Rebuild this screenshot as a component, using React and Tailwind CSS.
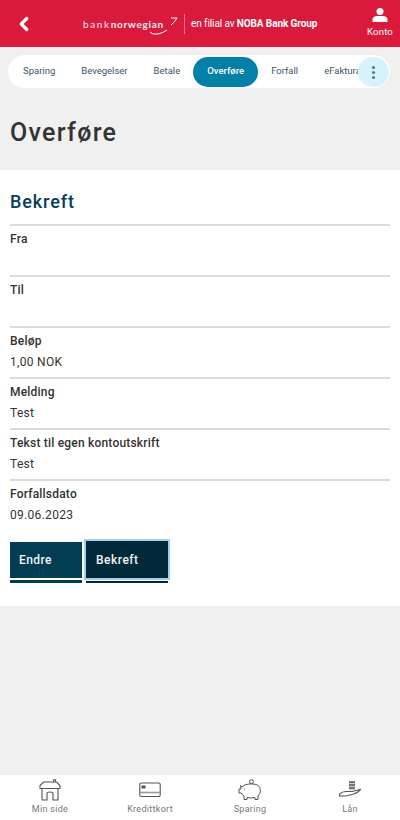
import { ChevronLeft } from 'lucide-react';

const tabs = ['Sparing', 'Bevegelser', 'Betale', 'Overføre', 'Forfall', 'eFaktura'];

const rows = [
    { label: 'Fra', value: '' },
    { label: 'Til', value: '' },
    { label: 'Beløp', value: '1,00 NOK' },
    { label: 'Melding', value: 'Test' },
    { label: 'Tekst til egen kontoutskrift', value: 'Test' },
    { label: 'Forfallsdato', value: '09.06.2023' },
];

const HomeIcon = () => (
    <svg width="22" height="22" viewBox="0 0 22 22" fill="none" stroke="#555" strokeWidth="1.1">
        <path d="M1 9.5 V6.5 L4.5 3 H17.5 L21 6.5 V9.5 Z" />
        <path d="M3 9.5 V21 H8 V14.5 Q8 13 11 13 Q14 13 14 14.5 V21 H19 V9.5" />
        <path d="M14.5 3 V0.8 H16.5 V3" />
    </svg>
);

const CardIcon = () => (
    <svg width="22" height="22" viewBox="0 0 22 22" fill="none" stroke="#555" strokeWidth="1.1">
        <rect x="0.8" y="4" width="20.4" height="13.5" rx="1.5" />
        <rect x="2.5" y="6.5" width="4" height="3" fill="#555" stroke="none" />
        <path d="M0.8 13.5 H21.2" stroke="#999" strokeWidth="1.6" />
    </svg>
);

const PiggyIcon = () => (
    <svg width="24" height="22" viewBox="0 0 24 22" fill="none" stroke="#555" strokeWidth="1">
        <path d="M4 8 Q7 5 11 5 H15 Q22 5 22.5 11.5 Q22.5 15 20 17 V20.5 H17 V18.5 Q13 19.5 9 18.5 V20.5 H6 V17 Q4 16 3.5 14 H1 V10 H3 L2.5 6.5 Z" />
        <circle cx="13.5" cy="2.6" r="2" />
        <circle cx="6.5" cy="10" r="0.7" fill="#4a90b8" stroke="none" />
    </svg>
);

const LoanIcon = () => (
    <svg width="22" height="22" viewBox="0 0 22 22" fill="none" stroke="#555" strokeWidth="1.1">
        <path d="M0.5 17 V15 Q4 12 8 12.5 H13 L21.5 10.5 Q20 13 15 15 L7 17 Z" />
        <rect x="10" y="2" width="6" height="2.4" fill="#777" stroke="none" />
        <rect x="10" y="5" width="6" height="2.4" fill="#777" stroke="none" />
        <rect x="10" y="8" width="6" height="2.4" fill="#777" stroke="none" />
    </svg>
);

const navItems = [
    { label: 'Min side', Icon: HomeIcon },
    { label: 'Kredittkort', Icon: CardIcon },
    { label: 'Sparing', Icon: PiggyIcon },
    { label: 'Lån', Icon: LoanIcon },
];

const App = () => {
    return (
        <div className="w-[400px] h-[820px] flex flex-col bg-[#f0f0f0] text-[#333] font-['Roboto',sans-serif]">
            <header className="h-[47px] shrink-0 bg-[#d91a3c] text-white flex items-center">
                <div className="w-[48px] flex justify-center">
                    <ChevronLeft size={22} strokeWidth={3.5} />
                </div>
                <div className="flex-1 flex items-center pl-[35px]">
                    <div className="relative w-[95px] h-[24px] flex items-center">
                        <span className="text-[10px] tracking-[1.6px] leading-none text-white/90 font-['Lato',sans-serif] whitespace-nowrap">
                            bank<b className="font-bold tracking-[0.7px]">norwegian</b>
                        </span>
                        <svg className="absolute right-[0px] top-[4px]" width="9" height="12" viewBox="0 0 9 12" fill="none" stroke="white" strokeWidth="1">
                            <path d="M2 2 H8 Q6 6 2 9" />
                        </svg>
                        <svg className="absolute left-[66px] top-[17px]" width="20" height="7" viewBox="0 0 20 7" fill="none" stroke="white" strokeWidth="1">
                            <path d="M1 3 Q3 6 9 5 Q14 4 18 1" />
                        </svg>
                    </div>
                    <div className="w-px h-[20px] bg-white/40 ml-[6px] mr-[6px]" />
                    <span className="text-[10px] whitespace-nowrap tracking-[-0.1px]">
                        en filial av <b className="font-bold">NOBA Bank Group</b>
                    </span>
                </div>
                <div className="w-[42px] flex flex-col items-center pb-[1px] pl-[2px]">
                    <svg width="16" height="14" viewBox="0 0 16 14" fill="white">
                        <circle cx="8" cy="3.6" r="3.5" />
                        <path d="M0.5 14 V11.5 Q0.5 8.5 4.5 8 H11.5 Q15.5 8.5 15.5 11.5 V14 Z" />
                    </svg>
                    <span className="text-[9.5px] leading-[12px] mt-[4px] tracking-[0.2px]">Konto</span>
                </div>
            </header>

            <div className="relative ml-[8px] mt-[8px] h-[33px] w-[382px] bg-white rounded-full flex items-center pl-[15px] overflow-hidden">
                {tabs.map((tab) => (
                    <span
                        key={tab}
                        className={
                            tab === 'Overføre'
                                ? 'h-[30px] w-[65px] -ml-[13px] mr-[13px] flex items-center justify-center rounded-full bg-[#0280a8] text-white text-[9.5px] font-medium'
                                : 'mr-[26px] text-[9.5px] text-[#3d5666] whitespace-nowrap'
                        }
                    >
                        {tab}
                    </span>
                ))}
                <div className="absolute right-[1px] top-[2px] w-[31px] h-[30px] rounded-full bg-[#d6f3fc] flex flex-col items-center justify-center gap-[2px]">
                    <i className="w-[3px] h-[3px] rounded-full bg-[#5a7480]" />
                    <i className="w-[3px] h-[3px] rounded-full bg-[#5a7480]" />
                    <i className="w-[3px] h-[3px] rounded-full bg-[#5a7480]" />
                </div>
            </div>

            <h1 className="h-[82px] shrink-0 flex items-center pt-[8px] pl-[10px] text-[25px] font-medium tracking-[1.3px] text-[#333]">
                Overføre
            </h1>

            <main className="bg-white h-[436px] shrink-0 px-[10px] pt-[20px]">
                <h2 className="text-[18px] font-medium leading-[24px] text-[#04405a] tracking-[0.9px]">Bekreft</h2>
                <div className="mt-[10px]">
                    {rows.map((row) => (
                        <div key={row.label} className="h-[51px] border-t-2 border-[#dcdcdc] pt-[5px]">
                            <div className="text-[12px] font-medium leading-[16px] tracking-[0.2px] text-[#333]">{row.label}</div>
                            <div className="text-[12px] leading-[16px] mt-[5px] tracking-[0.3px] text-[#333]">{row.value}</div>
                        </div>
                    ))}
                </div>
                <div className="flex items-start gap-[4px] mt-[12px]">
                    <div className="w-[72px] flex flex-col gap-[2px]">
                        <button className="h-[36px] bg-[#033d54] text-[#eef3f5] text-[12px] font-medium tracking-[0.4px] text-left pl-[9px]">
                            Endre
                        </button>
                        <div className="h-[3px] bg-[#033d54]" />
                    </div>
                    <div className="w-[82px] flex flex-col gap-[3px] -mt-[1px]">
                        <button className="h-[37px] bg-[#02293a] text-[#eef3f5] text-[12px] font-medium tracking-[0.5px] text-left pl-[10px] outline outline-2 outline-[#a6cdee]">
                            Bekreft
                        </button>
                        <div className="h-[2px] bg-[#02293a]" />
                    </div>
                </div>
            </main>

            <div className="flex-1" />

            <nav className="h-[45px] shrink-0 bg-white grid grid-cols-4">
                {navItems.map(({ label, Icon }) => (
                    <div key={label} className="flex flex-col items-center pt-[4px]">
                        <Icon />
                        <span className="text-[9px] text-[#777] tracking-[0.3px] leading-[12px] mt-[2px]">{label}</span>
                    </div>
                ))}
            </nav>
        </div>
    );
};

export default App;
